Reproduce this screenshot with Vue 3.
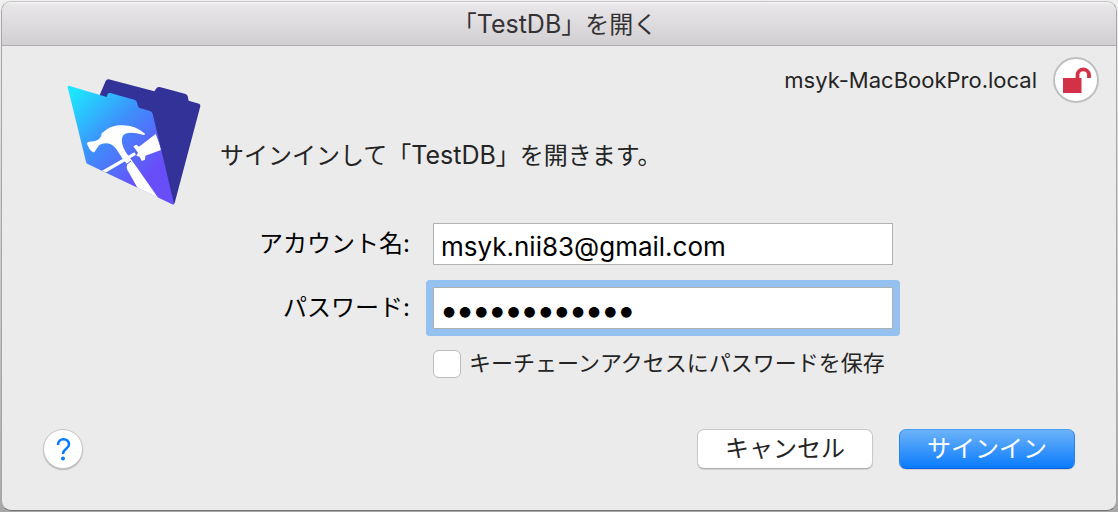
<script setup>
import { ref } from 'vue'

const host = 'msyk-MacBookPro.local'
const account = ref('msyk.nii83@gmail.com')
const password = ref('abcdefghijkl')
const remember = ref(false)
</script>

<template>
  <main class="desktop">
    <form class="window" @submit.prevent>
      <header class="titlebar"><h1>「<span class="name">TestDB</span>」を開く</h1></header>

      <section class="intro">
        <svg class="logo" viewBox="36 42 402 378" aria-hidden="true">
          <defs>
            <linearGradient id="folder" gradientUnits="userSpaceOnUse" x1="50" y1="90" x2="285" y2="325">
              <stop offset="0" stop-color="#1de4ff" />
              <stop offset="0.5" stop-color="#3f8dfb" />
              <stop offset="1" stop-color="#684ef9" />
            </linearGradient>
            <clipPath id="front">
              <path d="M38 62 L155 96 L160 84 L242 106 L250 128 L290 141 L357 418 L350 418 L95 295 Z" />
            </clipPath>
          </defs>
          <path d="M152 48 Q155 42 161 43 L298 79 L305 69 Q309 65 314 66 L392 87 Q397 89 398 94 L401 107 L432 116 Q437 118 436 124 L359 414 Q356 420 350 416 L130 100 Z" fill="#333299" />
          <path d="M38 67 Q37 61 44 63 L155 96 L158 87 Q160 83 166 84 L240 105 Q245 107 246 113 L249 124 Q250 127 254 129 L285 138 Q291 140 293 146 L357 416 Q356 420 350 417 L98 297 Q94 295 93 290 Z" fill="url(#folder)" />
          <g clip-path="url(#front)" fill="#fff">
            <path d="M140 318 L238 262 L243 269 L145 327 Z" />
            <path d="M235 244 L244 239 L252 245 L302 207 L320 254 L271 272 L270 284 L260 288 L254 275 L244 272 L249 263 Z" />
            <path d="M96 236 Q96 231 102 230 Q118 230 128 225 Q139 219 140 205 Q148 199 156 193 Q172 182 197 181 Q238 179 270 206 Q271 210 266 210 Q230 199 211 206 Q198 212 201 234 Q204 250 214 264 L240 299 L312 402 L250 374 Q238 351 216 313 Q214 305 217 298 Q204 285 193 266 Q179 241 164 236 Q145 232 132 241 L119 260 Q116 263 112 260 Q102 253 96 236 Z" />
          </g>
          <path d="M216 297 L228 288" stroke="#535ffa" stroke-width="3" />
        </svg>
        <p class="message">サインインして「<span class="name">TestDB</span>」を開きます。</p>
        <div class="host">
          <span>{{ host }}</span>
          <button class="lock" type="button" aria-label="接続の安全性">
            <svg viewBox="0 0 46 46" aria-hidden="true">
              <path d="M10 21 H28.500 V36 H10 Z" fill="#d33148" />
              <path d="M24.500 22 V17.500 A5.800 5.800 0 0 1 36 17.500 V21" fill="none" stroke="#d33148" stroke-width="3.800" />
            </svg>
          </button>
        </div>
      </section>

      <section class="fields">
        <label for="account">アカウント名:</label>
        <input id="account" v-model="account" type="text" autocomplete="off" />
        <label for="password">パスワード:</label>
        <input id="password" v-model="password" class="focused" type="password" autocomplete="off" />
        <div class="remember">
          <input id="remember" v-model="remember" type="checkbox" />
          <label for="remember">キーチェーンアクセスにパスワードを保存</label>
        </div>
      </section>

      <footer class="actions">
        <button class="help" type="button" aria-label="ヘルプ">
          <svg viewBox="0 0 40 40" aria-hidden="true">
            <path d="M15 16 C15 8.500 26 8.500 26 15.500 C26 20 20 19.500 20 25" fill="none" stroke="#087cff" stroke-width="2.500" />
            <circle cx="20" cy="29.500" r="2" fill="#087cff" />
          </svg>
        </button>
        <button class="push" type="button">キャンセル</button>
        <button class="push primary" type="submit">サインイン</button>
      </footer>
    </form>
  </main>
</template>

<style>
body {
  margin: 0;
}
</style>

<style scoped>
.desktop {
  box-sizing: border-box;
  display: flex;
  min-height: 100vh;
  padding: 1px;
  background: linear-gradient(#f0f0f0, #a8a8a8);
  color: #242424;
  font: 24px/34px Inter, "Noto Sans CJK JP", sans-serif;
}

.window {
  box-sizing: border-box;
  display: flex;
  flex: 1;
  flex-direction: column;
  overflow: hidden;
  border: 1px solid #b0b0b0;
  border-color: #c4c4c4 #a6a6a6 #747474;
  border-radius: 10px;
  background: #ebebeb;
}

.titlebar {
  border-bottom: 1px solid #adadad;
  background: linear-gradient(#f5f5f5, #e8e6e8 3px, #d1cfd1);
  text-align: center;
}

h1 {
  margin: 0;
  padding: 6px 8px 3px 0;
  color: #343234;
  font-size: 24px;
  font-weight: 400;
  line-height: 34px;
}

.name {
  font-size: 25px;
  line-height: 1;
}

.intro {
  display: grid;
  grid-template-columns: 134px 1fr auto;
  align-items: start;
  column-gap: 19px;
  padding: 11px 17px 0 65px;
}

.logo {
  display: block;
  width: 134px;
  margin-top: 22px;
}

.message {
  margin: 82px 0 0;
}

.host {
  display: flex;
  align-items: center;
  gap: 16px;
  font-size: 22px;
}

button {
  padding: 0;
  font-family: inherit;
}

.lock {
  box-sizing: border-box;
  width: 46px;
  height: 46px;
  border: 2px solid #c0c0c0;
  border-radius: 50%;
  background: #fff;
}

.lock svg {
  display: block;
  margin: -2px;
}

.fields {
  display: grid;
  grid-template-columns: 408fr 460fr 200fr;
  align-items: center;
  column-gap: 23px;
  row-gap: 22px;
  padding-top: 18px;
}

.fields > label {
  grid-column: 1;
  color: #000;
  text-align: right;
}

.fields > input {
  box-sizing: border-box;
  width: 100%;
  height: 42px;
  padding: 4px 7px 0;
  border: 1px solid #b2b2b2;
  border-radius: 0;
  outline: none;
  background: #fff;
  color: #000;
  font: 26px Inter, "Noto Sans CJK JP", sans-serif;
}

.fields > .focused {
  border-color: #adb0b3;
  box-shadow: 0 0 0 7px #94c1f0;
  border-radius: 1px;
  padding-top: 2px;
  font-size: 34px;
  font-weight: 700;
}

.remember {
  display: flex;
  grid-column: 2 / 4;
  align-items: center;
  gap: 8px;
  margin-top: -1px;
  font-size: 22px;
  line-height: 26px;
}

.remember label {
  padding-bottom: 2px;
}

.remember input {
  appearance: none;
  box-sizing: border-box;
  width: 28px;
  height: 28px;
  margin: 0;
  border: 1px solid #bcbcbc;
  border-radius: 6px;
  background: #fff;
}

.actions {
  display: flex;
  align-items: center;
  gap: 26px;
  margin-top: auto;
  padding: 0 41px 41px;
}

.help {
  box-sizing: border-box;
  width: 40px;
  height: 40px;
  margin-right: auto;
  border: 1px solid #c6c6c6;
  border-radius: 50%;
  background: #fff;
  box-shadow: 0 1px 1px #b4b4b4;
}

.help svg {
  display: block;
  margin: -1px;
}

.push {
  box-sizing: border-box;
  width: 176px;
  height: 40px;
  border: 1px solid #c8c8c8;
  border-bottom-color: #adadad;
  border-radius: 7px;
  background: #fff;
  box-shadow: 0 1px 1px #d0d0d0;
  color: #242424;
  font-size: 24px;
  line-height: 34px;
}

.primary {
  border-color: #4a9df2 #2b83f2 #0a5fe6;
  background: linear-gradient(#6cb3f8, #0a7bfe);
  color: #fff;
}
</style>
